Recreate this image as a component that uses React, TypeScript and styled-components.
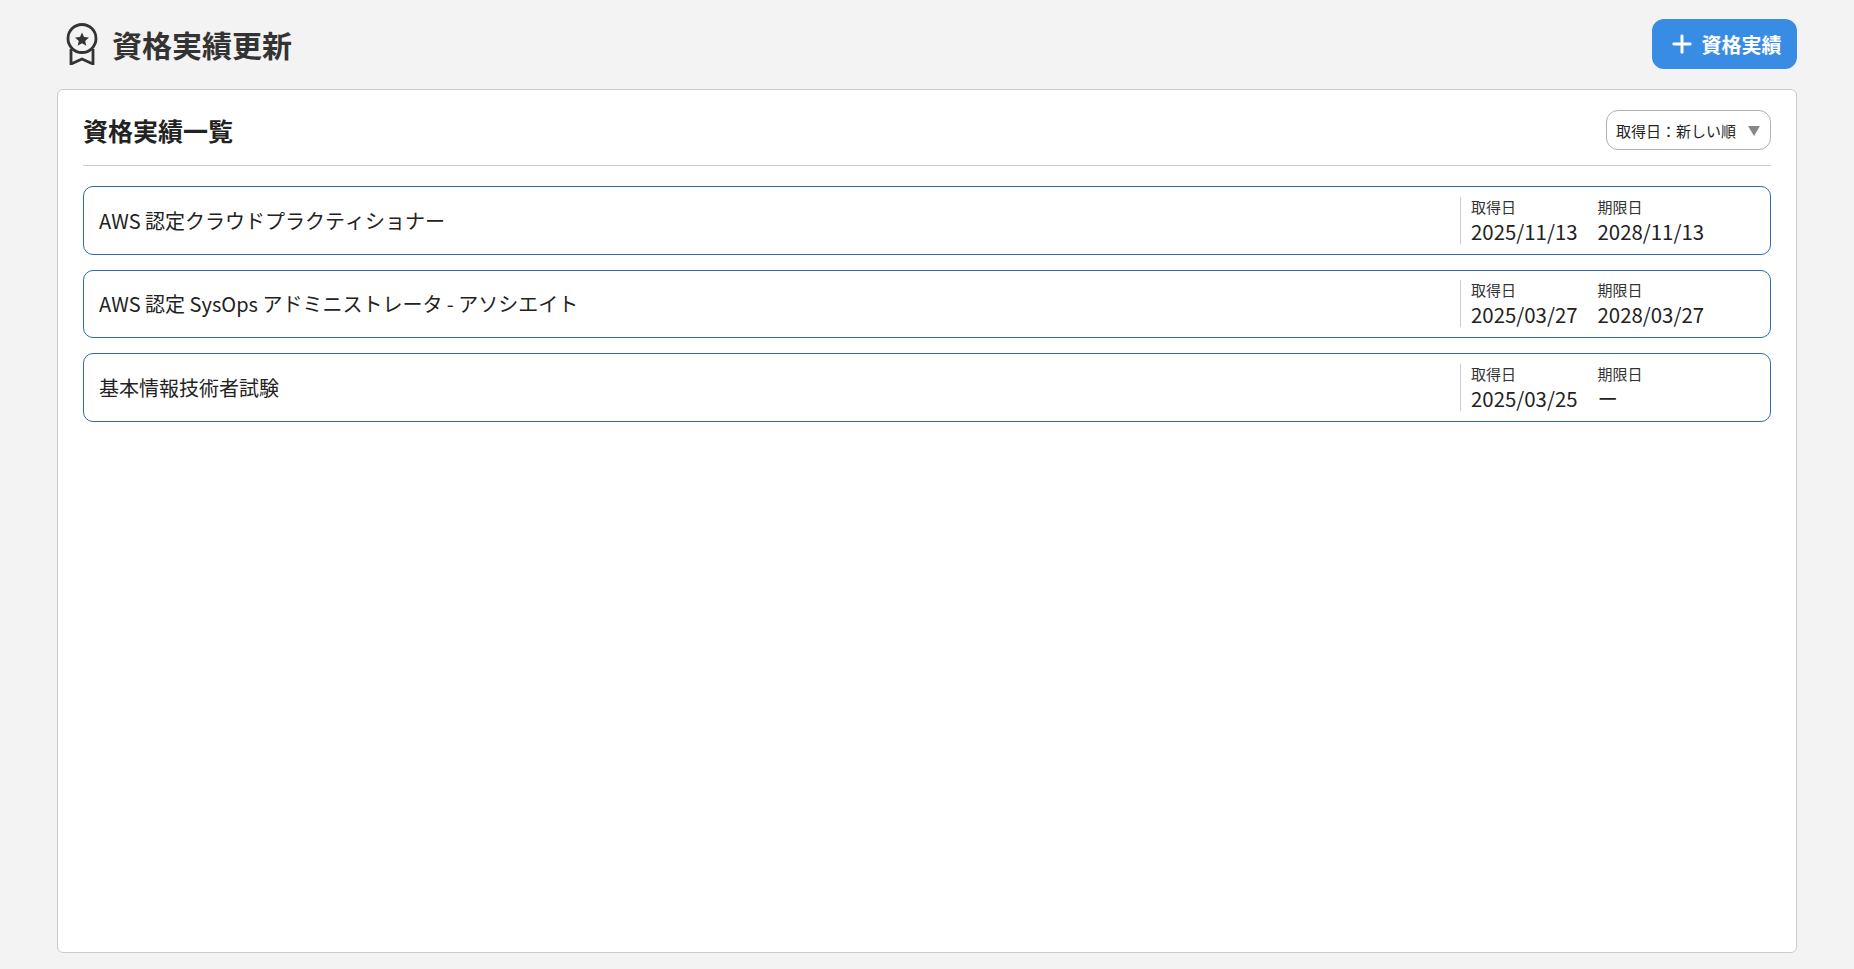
import { ReactElement } from 'react';
import styled, { createGlobalStyle } from 'styled-components';
import { Plus } from 'lucide-react';

const GlobalStyle = createGlobalStyle`
  html, body {
    margin: 0;
    padding: 0;
    background: #f3f3f3;
    color: #222;
    font-family: "Noto Sans CJK JP", "Noto Sans", sans-serif;
    font-kerning: none;
  }
`;

const Page = styled.div`
  box-sizing: border-box;
  height: 969px;
  padding: 19px 57px 16px;
  display: flex;
  flex-direction: column;
  gap: 20px;
  overflow: hidden;
`;

const Header = styled.header`
  display: flex;
  align-items: center;
  justify-content: space-between;
  height: 50px;
`;

const TitleGroup = styled.div`
  display: flex;
  align-items: center;
  gap: 13px;
  padding-left: 8px;
`;

const PageTitle = styled.h1`
  margin: 0;
  font-size: 30px;
  font-weight: 700;
  line-height: 1;
  color: #333;
`;

const AddButton = styled.button`
  display: flex;
  align-items: center;
  justify-content: center;
  gap: 6px;
  width: 145px;
  height: 50px;
  padding: 0;
  border: none;
  border-radius: 12px;
  background: #388ce4;
  color: #fff;
  font-family: inherit;
  font-size: 20px;
  font-weight: 700;
`;

const Card = styled.section`
  flex: 1;
  box-sizing: border-box;
  padding: 20px 25px;
  background: #fff;
  border: 1px solid #ccc;
  border-radius: 6px;
`;

const CardHeader = styled.div`
  display: flex;
  align-items: flex-start;
  justify-content: space-between;
  height: 55px;
  border-bottom: 1px solid #ccc;
  margin-bottom: 20px;
`;

const CardTitle = styled.h2`
  margin: 8px 0 0;
  font-size: 25px;
  font-weight: 700;
  line-height: 1;
`;

const SortSelect = styled.div`
  display: flex;
  align-items: center;
  justify-content: space-between;
  box-sizing: border-box;
  width: 165px;
  height: 40px;
  padding: 0 10px 0 9px;
  border: 1px solid #b0b0b0;
  border-radius: 12px;
  font-size: 15px;
`;

const Caret = styled.span`
  width: 0;
  height: 0;
  margin-top: 2px;
  border-left: 6px solid transparent;
  border-right: 6px solid transparent;
  border-top: 10px solid #888;
`;

const List = styled.div`
  display: flex;
  flex-direction: column;
  gap: 15px;
`;

const Row = styled.article`
  display: flex;
  align-items: center;
  justify-content: space-between;
  box-sizing: border-box;
  height: 68.5px;
  padding: 10px 15px;
  border: 1px solid #2b6cb0;
  border-radius: 10px;
`;

const Name = styled.div`
  font-size: 20px;
`;

const Dates = styled.div`
  display: flex;
  box-sizing: border-box;
  width: 295px;
  height: 47px;
  padding-left: 10px;
  border-left: 1px solid #ccc;
`;

const DateCol = styled.div`
  width: 126.5px;
  display: flex;
  flex-direction: column;
`;

const DateLabel = styled.div`
  font-size: 15px;
  line-height: 19px;
  color: #333;
`;

const DateValue = styled.div`
  font-size: 20.4px;
  line-height: 31px;
`;

const BadgeIcon = (): ReactElement => (
  <svg width="34" height="42" viewBox="0 0 34 42" fill="none" stroke="#333" strokeWidth="2.8">
    <circle cx="17" cy="15.5" r="14" />
    <path d="M6 26 V41 L17 36 L28 41 V26" />
    <path d="M17 9.5 l2 4.6 5 .5-3.8 3.3 1.1 4.9-4.3-2.6-4.3 2.6 1.1-4.9-3.8-3.3 5-.5z" fill="#333" stroke="none" />
  </svg>
);

interface Certificate {
  name: string;
  acquired: string;
  expires: string;
}

const certificates: Certificate[] = [
  { name: 'AWS 認定クラウドプラクティショナー', acquired: '2025/11/13', expires: '2028/11/13' },
  { name: 'AWS 認定 SysOps アドミニストレータ - アソシエイト', acquired: '2025/03/27', expires: '2028/03/27' },
  { name: '基本情報技術者試験', acquired: '2025/03/25', expires: 'ー' }
];

const App = (): ReactElement => (
  <Page>
    <GlobalStyle />
    <Header>
      <TitleGroup>
        <BadgeIcon />
        <PageTitle>資格実績更新</PageTitle>
      </TitleGroup>
      <AddButton>
        <Plus size={28} strokeWidth={2.5} />
        資格実績
      </AddButton>
    </Header>
    <Card>
      <CardHeader>
        <CardTitle>資格実績一覧</CardTitle>
        <SortSelect>
          取得日：新しい順
          <Caret />
        </SortSelect>
      </CardHeader>
      <List>
        {certificates.map((cert) => (
          <Row key={cert.name}>
            <Name>{cert.name}</Name>
            <Dates>
              <DateCol>
                <DateLabel>取得日</DateLabel>
                <DateValue>{cert.acquired}</DateValue>
              </DateCol>
              <DateCol>
                <DateLabel>期限日</DateLabel>
                <DateValue>{cert.expires}</DateValue>
              </DateCol>
            </Dates>
          </Row>
        ))}
      </List>
    </Card>
  </Page>
);

export default App;
